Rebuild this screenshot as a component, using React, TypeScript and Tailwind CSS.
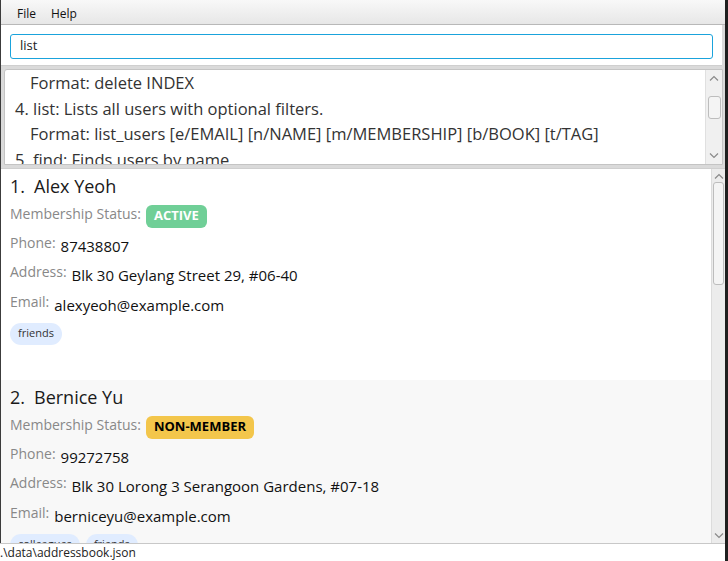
import React from 'react'

const font = { fontFamily: '"Open Sans", "Noto Sans", sans-serif' }

const helpLines: { text: string; indent?: boolean }[] = [
  { text: 'Format: delete INDEX', indent: true },
  { text: '4. list: Lists all users with optional filters.' },
  { text: 'Format: list_users [e/EMAIL] [n/NAME] [m/MEMBERSHIP] [b/BOOK] [t/TAG]', indent: true },
  { text: '5. find: Finds users by name.' },
]

type Person = {
  name: string
  status: string
  badge: string
  phone: string
  address: string
  email: string
  tags: string[]
  alt?: boolean
}

const people: Person[] = [
  {
    name: 'Alex Yeoh',
    status: 'ACTIVE',
    badge: 'bg-[#70cf97] text-white',
    phone: '87438807',
    address: 'Blk 30 Geylang Street 29, #06-40',
    email: 'alexyeoh@example.com',
    tags: ['friends'],
  },
  {
    name: 'Bernice Yu',
    status: 'NON-MEMBER',
    badge: 'bg-[#f3c64b] text-black',
    phone: '99272758',
    address: 'Blk 30 Lorong 3 Serangoon Gardens, #07-18',
    email: 'berniceyu@example.com',
    tags: ['colleagues', 'friends'],
    alt: true,
  },
]

const Chevron: React.FC<{ up?: boolean }> = ({ up }) => (
  <svg width="10" height="6" viewBox="0 0 10 6" fill="none" stroke="#8a8a8a" strokeWidth={1.2}>
    {up ? <path d="M1 5.5L5 1.5L9 5.5" /> : <path d="M1 0.5L5 4.5L9 0.5" />}
  </svg>
)

const Field: React.FC<{ label: string; value: string }> = ({ label, value }) => (
  <div className="flex items-center h-[29.5px] gap-[5px]">
    <span className="text-[14px] text-[#888] pb-[7px]">{label}</span>
    <span className="text-[15px] font-medium text-[#111]">{value}</span>
  </div>
)

const PersonCard: React.FC<{ p: Person; index: number }> = ({ p, index }) => (
  <div className={`${p.alt ? 'bg-[#f8f8f8]' : 'bg-white'} h-[211px] pl-[9px] pt-[2px] shrink-0`}>
    <div className="h-[30px] flex items-center text-[18px] text-[#1a1a1a]">
      <span>{index}.</span>
      <span className="ml-[9px]">{p.name}</span>
    </div>
    <div className="flex items-center h-[30px] gap-[5px]">
      <span className="text-[14px] text-[#888] pb-[5px]">Membership Status:</span>
      <span className={`${p.badge} rounded-[6px] px-[8px] h-[23px] flex items-center text-[13px] font-bold`}>
        {p.status}
      </span>
    </div>
    <Field label="Phone:" value={p.phone} />
    <Field label="Address:" value={p.address} />
    <Field label="Email:" value={p.email} />
    <div className="flex gap-[6px] mt-[3px]">
      {p.tags.map(t => (
        <span key={t} className="bg-[#e0ecff] text-[#333] text-[11px] rounded-full px-[8px] h-[22px] flex items-center">
          {t}
        </span>
      ))}
    </div>
  </div>
)

export default function App() {
  return (
    <div className="w-[728px] h-[561px] flex bg-[#1f1f1f] overflow-hidden" style={font}>
      <div className="w-[725px] h-full flex flex-col border-l border-[#3c3c3c] bg-[#dadada]">
        {/* menu bar */}
        <div className="h-[25px] shrink-0 flex items-center gap-[15px] pl-[16px] pt-[3px] text-[12px] text-[#111] bg-gradient-to-b from-[#f8f8f8] to-[#e7e7e7] border-b border-[#b8b8b8]">
          <span>File</span>
          <span>Help</span>
        </div>

        {/* command box */}
        <div className="h-[41px] shrink-0 bg-white flex items-center px-[9px] pt-[2px] mr-[3px] border-b border-[#cfcfcf]">
          <div className="w-full h-[25px] border border-[#1aa3dc] rounded-[3px] flex items-center pl-[9px] text-[13px] text-[#222]">
            list
          </div>
        </div>

        {/* result display */}
        <div className="h-[102px] shrink-0 pt-[3px] pb-[3px] pl-[3px] pr-[2px]">
          <div className="h-full bg-white border border-[#c4c4c4] rounded-tl-[3px] flex overflow-hidden">
            <div className="flex-1 pl-[10px] text-[16.5px] text-[#333] leading-[25.5px] whitespace-nowrap overflow-hidden">
              {helpLines.map(l => (
                <div key={l.text} className={l.indent ? 'pl-[15px]' : ''}>
                  {l.text}
                </div>
              ))}
            </div>
            <div className="w-[17px] h-full bg-[#f0f0f0] border-l border-[#e0e0e0] flex flex-col items-center pt-[5px] pb-[5px]">
              <Chevron up />
              <div className="w-[13px] h-[23px] bg-[#f4f4f4] border border-[#bdbdbd] rounded-[3px] mt-[15px]" />
              <div className="flex-1" />
              <Chevron />
            </div>
          </div>
        </div>

        {/* person list */}
        <div className="flex-1 flex bg-white min-h-0 border-t border-[#cfcfcf]">
          <div className="flex-1 flex flex-col overflow-hidden">
            {people.map((p, i) => (
              <PersonCard key={p.name} p={p} index={i + 1} />
            ))}
          </div>
          <div className="w-[14px] bg-[#ececec] border-l border-[#dcdcdc] flex flex-col items-center justify-between py-[4px]">
            <div className="flex flex-col items-center gap-[3px]">
              <Chevron up />
              <div className="w-[11px] h-[103px] bg-[#f4f4f4] border border-[#bdbdbd] rounded-[3px]" />
            </div>
            <Chevron />
          </div>
        </div>

        {/* status bar */}
        <div className="h-[18px] shrink-0 bg-white border-t border-[#c8c8c8] flex items-center text-[12px] text-[#222] -ml-[1px]">
          .\data\addressbook.json
        </div>
      </div>
      <div className="w-[3px] h-full bg-[#1f1f1f]" />
    </div>
  )
}
